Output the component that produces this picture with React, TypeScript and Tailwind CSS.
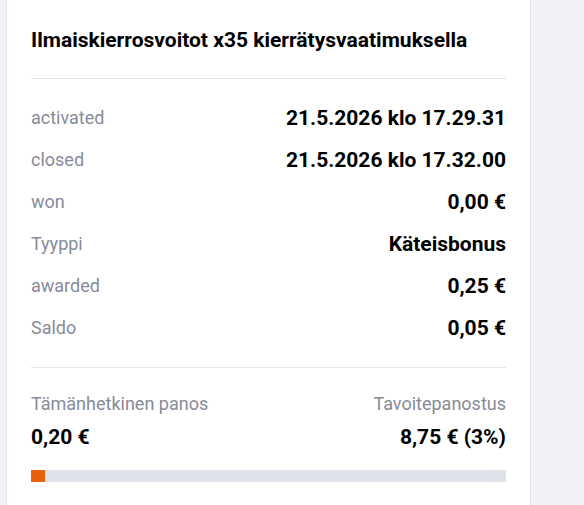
import React from 'react'

type Row = { label: string; value: string }

const rows: Row[] = [
    { label: 'activated', value: '21.5.2026 klo 17.29.31' },
    { label: 'closed', value: '21.5.2026 klo 17.32.00' },
    { label: 'won', value: '0,00 €' },
    { label: 'Tyyppi', value: 'Käteisbonus' },
    { label: 'awarded', value: '0,25 €' },
    { label: 'Saldo', value: '0,05 €' },
]

const progress = 3

const App: React.FC = () => {
    return (
        <div
            className="min-h-screen bg-[#f0f1f4] pl-[6px]"
            style={{ fontFamily: 'Roboto, "Liberation Sans", sans-serif' }}
        >
            <div className="w-[525px] min-h-[505px] bg-white border-x border-[#e3e5ea] px-6 pt-[26px]">
                <h2 className="text-[21px] leading-7 font-bold text-black">
                    Ilmaiskierrosvoitot x35 kierrätysvaatimuksella
                </h2>
                <div className="mt-6 border-t border-[#e3e5ea]" />
                <div className="pt-[18px] pb-[18px]">
                    {rows.map((row) => (
                        <div
                            key={row.label}
                            className="flex h-[42px] items-center justify-between"
                        >
                            <span className="text-[18px] leading-6 text-[#878b99]">
                                {row.label}
                            </span>
                            <span className="text-[21px] leading-7 font-bold text-black">
                                {row.value}
                            </span>
                        </div>
                    ))}
                </div>
                <div className="border-t border-[#e3e5ea]" />
                <div className="flex justify-between pt-6">
                    <div className="flex flex-col">
                        <span className="text-[18px] leading-6 text-[#878b99]">
                            Tämänhetkinen panos
                        </span>
                        <span className="mt-[7px] text-[21px] leading-7 font-bold text-black">
                            0,20 €
                        </span>
                    </div>
                    <div className="flex flex-col items-end">
                        <span className="text-[18px] leading-6 text-[#878b99]">
                            Tavoitepanostus
                        </span>
                        <span className="mt-[7px] text-[21px] leading-7 font-bold text-black">
                            8,75 € (3%)
                        </span>
                    </div>
                </div>
                <div className="mt-[19px] h-3 bg-[#dfe1e8]">
                    <div
                        className="h-full bg-[#e8600c]"
                        style={{ width: `${progress}%` }}
                    />
                </div>
            </div>
        </div>
    )
}

export default App
